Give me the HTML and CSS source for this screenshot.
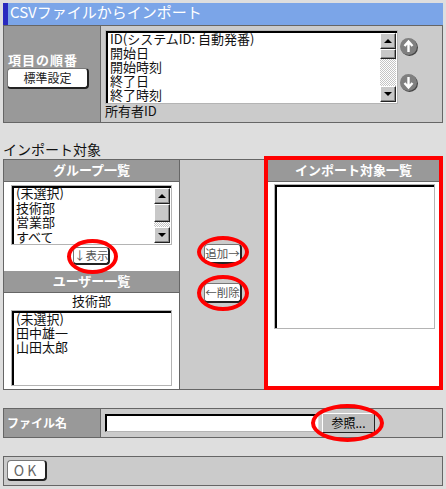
FILE: index.html
```html
<!DOCTYPE html>
<html lang="ja">
<head>
<meta charset="utf-8">
<title>CSVファイルからインポート</title>
<link rel="stylesheet" href="styles.css">
</head>
<body>
<div class="page">
  <h1 class="title">CSVファイルからインポート</h1>

  <section class="panel order-panel">
    <div class="label-cell order-label">
      <div class="label-text order-text">項目の順番</div>
      <button class="btn btn-default">標準設定</button>
    </div>
    <div class="order-body">
      <div class="order-top">
        <div class="listbox order-list">
          <div class="list-items">
            <div>ID(システムID: 自動発番)</div>
            <div>開始日</div>
            <div>開始時刻</div>
            <div>終了日</div>
            <div>終了時刻</div>
          </div>
          <div class="scrollbar">
            <div class="sb-btn"><span class="tri-up"></span></div>
            <div class="sb-thumb thumb-small"></div>
            <div class="sb-track"></div>
            <div class="sb-btn"><span class="tri-down"></span></div>
          </div>
        </div>
        <div class="move-icons">
          <svg class="move-icon" viewBox="0 0 18 18" width="18" height="18"><circle cx="9.5" cy="9.5" r="8.5" fill="#444"/><circle cx="8.5" cy="8.5" r="8.5" fill="#808080"/><path d="M8.5 3.5V14M4.5 8l4-4.5 4 4.5" fill="none" stroke="#fff" stroke-width="2.4"/></svg>
          <svg class="move-icon" viewBox="0 0 18 18" width="18" height="18"><circle cx="9.5" cy="9.5" r="8.5" fill="#444"/><circle cx="8.5" cy="8.5" r="8.5" fill="#808080"/><path d="M8.5 3V13.5M4.5 9l4 4.5 4-4.5" fill="none" stroke="#fff" stroke-width="2.4"/></svg>
        </div>
      </div>
      <div class="overflow-item">所有者ID</div>
    </div>
  </section>

  <h2 class="section-title">インポート対象</h2>

  <section class="panel target-panel">
    <div class="col-left">
      <div class="col-head">グループ一覧</div>
      <div class="group-body">
        <div class="listbox group-list">
          <div class="list-items">
            <div>(未選択)</div>
            <div>技術部</div>
            <div>営業部</div>
            <div>すべて</div>
          </div>
          <div class="scrollbar">
            <div class="sb-btn"><span class="tri-up"></span></div>
            <div class="sb-thumb thumb-large"></div>
            <div class="sb-track"></div>
            <div class="sb-btn"><span class="tri-down"></span></div>
          </div>
        </div>
        <button class="btn btn-small ring ring-show">↓表示</button>
      </div>
      <div class="col-head">ユーザー一覧</div>
      <div class="user-body">
        <div class="user-group">技術部</div>
        <div class="listbox user-list">
          <div class="list-items">
            <div>(未選択)</div>
            <div>田中雄一</div>
            <div>山田太郎</div>
          </div>
        </div>
      </div>
    </div>
    <div class="col-mid">
      <button class="btn btn-small ring ring-add">追加→</button>
      <button class="btn btn-small ring ring-del">←削除</button>
    </div>
    <div class="col-right">
      <div class="col-head">インポート対象一覧</div>
      <div class="target-body">
        <div class="listbox target-list"></div>
      </div>
    </div>
  </section>

  <section class="panel file-panel">
    <div class="label-cell file-label"><span class="label-text file-text">ファイル名</span></div>
    <div class="file-body">
      <div class="file-input"></div>
      <button class="browse ring ring-browse">参照...</button>
    </div>
  </section>

  <section class="panel ok-panel">
    <button class="btn btn-ok">OK</button>
  </section>
</div>
</body>
</html>
```

FILE: styles.css
```css
* {
  box-sizing: border-box;
}

html,
body {
  margin: 0;
  height: 100%;
  background: #dedede;
}

body {
  font-family: "Noto Sans CJK JP", "DejaVu Sans", sans-serif;
  font-size: 13px;
  color: #111;
  overflow: hidden;
}

.page {
  width: 440px;
  margin: 3px 0 0 3px;
}

.title {
  margin: 0;
  height: 22px;
  padding-left: 2px;
  background: #7ba5e8;
  border-left: 5px solid #2a2abf;
  color: #fff;
  font-size: 15px;
  font-weight: 400;
  line-height: 18px;
}

.panel {
  display: flex;
  border: 1px solid #666;
  background: #cbcbcb;
}

.label-cell {
  background: #999;
  border-right: 1px solid #666;
  flex: 0 0 97px;
}

.label-text {
  color: #fff;
  font-weight: 700;
  line-height: 16px;
}

.order-text {
  font-size: 13px;
  letter-spacing: 1px;
  margin-left: 1px;
}

.file-text {
  font-size: 12px;
}

/* Column order panel */
.order-panel {
  height: 98px;
}

.order-label {
  padding: 26px 0 0 3px;
}

.order-body {
  flex: 1;
  padding: 4px 0 0 4px;
}

.order-top {
  display: flex;
  gap: 2px;
}

.overflow-item {
  line-height: 13px;
}

.listbox {
  display: flex;
  background: #fff;
  border: 1px solid #b4b4b4;
  box-shadow: inset 2px 2px 0 #000;
  line-height: 14px;
}

.list-items {
  flex: 1;
  padding: 1px 0 0 4px;
  white-space: nowrap;
}

.order-list {
  width: 293px;
  height: 74px;
}

.scrollbar {
  display: flex;
  flex-direction: column;
  flex: 0 0 16px;
  margin: 2px 1px 1px 0;
  background: repeating-conic-gradient(#c4c4c4 0 25%, #fff 0 50%) 0 0 / 2px 2px;
}

.sb-btn,
.sb-thumb {
  background: #c8c8c8;
  border: 1px solid;
  border-color: #fff #222 #222 #fff;
  box-shadow: inset -1px -1px 0 #888;
}

.sb-btn {
  flex: 0 0 16px;
  display: flex;
  align-items: center;
  justify-content: center;
}

.sb-track {
  flex: 1;
}

.thumb-small {
  flex: 0 0 10px;
}

.thumb-large {
  flex: 0 0 18px;
}

.tri-up {
  border: 4px solid transparent;
  border-top: 0;
  border-bottom: 4px solid #000;
}

.tri-down {
  border: 4px solid transparent;
  border-bottom: 0;
  border-top: 4px solid #000;
}

.move-icons {
  display: flex;
  flex-direction: column;
  gap: 18px;
  padding-top: 8px;
}

.move-icon {
  display: block;
}

/* Buttons */
.btn {
  display: block;
  padding: 0;
  font: inherit;
  background: #fff;
  color: #222;
  border: 1px solid #777;
  border-right: 2px solid #222;
  border-bottom: 2px solid #222;
  border-radius: 4px;
}

.btn-default {
  width: 82px;
  height: 21px;
  font-size: 12px;
  line-height: 16px;
}

.btn-small {
  font-size: 11.5px;
  line-height: 15px;
  color: #555;
  white-space: nowrap;
}

.ring {
  position: relative;
}

.ring::after {
  content: "";
  position: absolute;
  border: 4px solid #f00;
  border-radius: 50%;
  pointer-events: none;
}

.ring-show::after {
  inset: -9px -10px -11px -7px;
}

.ring-add::after {
  inset: -9px -9px -6px -8px;
}

.ring-del::after {
  inset: -9px -9px -10px -8px;
}

.ring-browse::after {
  inset: -10px -10px -10px -12px;
}

/* Import target panel */
.section-title {
  margin: 0;
  padding-top: 17px;
  height: 36px;
  font-size: 14px;
  font-weight: 400;
  line-height: 18px;
}

.target-panel {
  height: 231px;
}

.col-head {
  height: 22px;
  background: #999;
  border-bottom: 1px solid #666;
  color: #fff;
  font-size: 13px;
  font-weight: 700;
  line-height: 20px;
  text-align: center;
}

.col-left {
  flex: 0 0 176px;
  background: #fff;
  border-right: 1px solid #666;
}

.group-body {
  height: 89px;
  padding: 3px 0 0 7px;
}

.group-list {
  width: 161px;
  height: 60px;
  line-height: 14.5px;
}

.group-list .list-items {
  padding-top: 0;
}

.btn-small.ring-show {
  width: 37px;
  height: 18px;
  margin: 2px 0 0 62px;
}

.user-body {
  padding: 0 0 0 7px;
}

.user-group {
  width: 161px;
  height: 17px;
  line-height: 16px;
  text-align: center;
}

.user-list {
  width: 161px;
  height: 76px;
}

.col-mid {
  flex: 0 0 84px;
  display: flex;
  flex-direction: column;
  align-items: center;
  padding: 84px 0 0 2px;
  gap: 19px;
}

.col-mid .btn-small {
  width: 38px;
  height: 20px;
}

.col-right {
  flex: 1;
  position: relative;
  margin: -4px -1px -1px 0;
  border: 4px solid #f00;
  background: #fff;
}

.target-body {
  padding: 2px 0 0 6px;
}

.target-list {
  width: 161px;
  height: 145px;
}

/* File row */
.file-panel {
  height: 30px;
  margin-top: 18px;
}

.file-label {
  padding-left: 3px;
  line-height: 28px;
}

.file-body {
  flex: 1;
  display: flex;
  align-items: center;
  padding-left: 4px;
}

.file-input {
  width: 214px;
  height: 18px;
  margin-right: 3px;
  background: #fff;
  border: 1px solid;
  border-color: #000 #ddd #b4b4b4 #000;
  box-shadow: inset 1px 1px 0 #000;
}

.browse {
  width: 53px;
  height: 20px;
  padding: 0;
  font: inherit;
  font-size: 12px;
  line-height: 16px;
  background: #bdbdbd;
  border: 1px solid;
  border-color: #fff #222 #222 #fff;
}

/* OK row */
.ok-panel {
  height: 30px;
  margin-top: 18px;
  padding: 3px 0 0 3px;
}

.btn-ok {
  width: 40px;
  height: 21px;
  color: #666;
  font-size: 14px;
  letter-spacing: 3px;
  line-height: 16px;
}
```
